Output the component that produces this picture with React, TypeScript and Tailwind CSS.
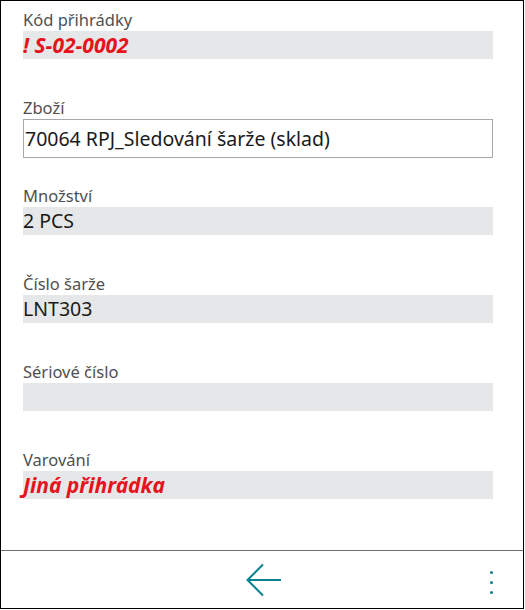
import React from "react"

const font = { fontFamily: '"Noto Sans", "Open Sans", sans-serif' }

function Label({ text }: { text: string }) {
  return <div className="h-[20px] text-[16.5px] leading-[18px] text-[#505050]">{text}</div>
}

function ReadOnly({ value, warn }: { value?: string; warn?: boolean }) {
  return (
    <div
      className={
        "h-[28px] w-[470px] bg-[#e6e7e9] leading-[28px] " +
        (warn ? "text-[21px] font-bold italic text-[#e5141c]" : "text-[19.5px] text-[#1a1a1a]")
      }
    >
      {value}
    </div>
  )
}

export default function App() {
  return (
    <div style={font} className="w-[524px] h-[609px] border border-black bg-white flex flex-col">
      <div className="flex-1 pl-[22px] pt-[10px]">
        <div className="h-[88px]">
          <Label text="Kód přihrádky" />
          <ReadOnly value="! S-02-0002" warn />
        </div>
        <div className="h-[88px]">
          <Label text="Zboží" />
          <div className="h-[39px] w-[470px] border border-[#a8a8a8] pl-[1px] text-[19.5px] leading-[37px] text-[#1a1a1a]">
            70064 RPJ_Sledování šarže (sklad)
          </div>
        </div>
        <div className="h-[88px]">
          <Label text="Množství" />
          <ReadOnly value="2 PCS" />
        </div>
        <div className="h-[88px]">
          <Label text="Číslo šarže" />
          <ReadOnly value="LNT303" />
        </div>
        <div className="h-[88px]">
          <Label text="Sériové číslo" />
          <ReadOnly />
        </div>
        <div className="h-[88px]">
          <Label text="Varování" />
          <ReadOnly value="Jiná přihrádka" warn />
        </div>
      </div>
      <div className="h-[58px] border-t border-[#707070] flex items-center relative">
        <div className="flex-1 flex justify-center">
          <svg width="36" height="34" viewBox="0 0 36 34" className="ml-[3px]">
            <path d="M17 1.5 L1.5 17 L17 32.5 M1.5 17 H35" fill="none" stroke="#0a8290" strokeWidth="2" />
          </svg>
        </div>
        <div className="absolute right-[30px] top-[20px] flex flex-col gap-[7px]">
          <span className="block w-[3px] h-[3px] rounded-full bg-[#0a7f8c]" />
          <span className="block w-[3px] h-[3px] rounded-full bg-[#0a7f8c]" />
          <span className="block w-[3px] h-[3px] rounded-full bg-[#0a7f8c]" />
        </div>
      </div>
    </div>
  )
}
